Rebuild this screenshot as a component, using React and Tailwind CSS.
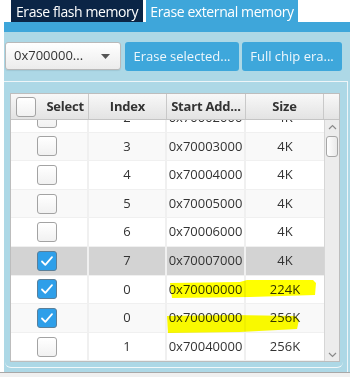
import React from 'react'

const rows = [
  { idx: '2', addr: '0x70002000', size: '4K', checked: false },
  { idx: '3', addr: '0x70003000', size: '4K', checked: false },
  { idx: '4', addr: '0x70004000', size: '4K', checked: false },
  { idx: '5', addr: '0x70005000', size: '4K', checked: false },
  { idx: '6', addr: '0x70006000', size: '4K', checked: false },
  { idx: '7', addr: '0x70007000', size: '4K', checked: true, selected: true },
  { idx: '0', addr: '0x70000000', size: '224K', checked: true },
  { idx: '0', addr: '0x70000000', size: '256K', checked: true },
  { idx: '1', addr: '0x70040000', size: '256K', checked: false },
]

function CheckBox({ checked }) {
  if (checked) {
    return (
      <div className="w-[20px] h-[20px] rounded-[3px] border border-[#5a7f99] bg-[#2e9fe9] flex items-center justify-center">
        <svg width="14" height="12" viewBox="0 0 14 12">
          <path d="M2 6.5 L5.3 9.8 L12 2.2" stroke="white" strokeWidth="1.8" fill="none" strokeLinecap="round" strokeLinejoin="round" />
        </svg>
      </div>
    )
  }
  return <div className="w-[20px] h-[20px] rounded-[3px] border border-[#a3a3a3] bg-linear-to-b from-white to-[#f1f1f1]" />
}

const headCell = 'h-full flex items-center justify-center border-r border-[#c9c9c9] bg-linear-to-b from-[#f8f8f8] to-[#e3e3e3] font-bold text-[13px] tracking-[-0.2px] text-[#333]'

export default function App() {
  return (
    <div
      className="relative w-[350px] h-[377px] bg-white overflow-hidden flex flex-col"
      style={{ fontFamily: '"Open Sans", "Noto Sans", sans-serif' }}
    >
      {/* tabs */}
      <div className="flex h-[22px] pl-[11px] gap-[3px] shrink-0">
        <div className="w-[132px] bg-[#0b2546] text-white text-[14px] tracking-[-0.4px] flex items-center justify-center">Erase flash memory</div>
        <div className="w-[152px] bg-[#3ea6da] text-white text-[14px] tracking-[-0.4px] flex items-center justify-center">Erase external memory</div>
      </div>
      <div className="ml-[4px] h-[10px] bg-[#3ea6da] shrink-0" />

      <div className="ml-[4px] flex-1 bg-[#add8e6] flex flex-col">
        {/* toolbar */}
        <div className="flex pt-[10px] pl-[1px] items-start">
          <div className="w-[116px] h-[28px] rounded-[3px] border border-[#b9b9b9] bg-linear-to-b from-white to-[#ececec] flex items-center justify-between pl-[8px] pr-[10px] text-[13px] text-[#333] shadow-[0_1px_1px_rgba(0,0,0,0.08)]">
            <span>0x700000...</span>
            <svg width="9" height="5" viewBox="0 0 9 5"><path d="M0 0 H9 L4.5 5 Z" fill="#555" /></svg>
          </div>
          <button className="ml-[4px] w-[114px] h-[29px] rounded-[3px] bg-[#3ea7db] text-[#eef7fc] text-[13px]">Erase selected...</button>
          <button className="ml-[3px] w-[100px] h-[29px] rounded-[3px] bg-[#3ea7db] text-[#eef7fc] text-[13px]">Full chip era...</button>
        </div>

        {/* table region */}
        <div className="mt-[10px] flex-1 border-t border-r border-[#eef5f8] mr-[2px]">
          <div className="ml-[1px] w-[338px] pl-[5px] pt-[11px] pb-[5px] border-b border-[#f2f8fa] rounded-b-[6px]">
            <div className="w-[330px] h-[269px] border border-[#bdbdbd] flex flex-col bg-white">
              {/* header */}
              <div className="flex h-[26px] border-b border-[#c4c4c4] shrink-0">
                <div className={`${headCell} w-[78px] !justify-between pl-[5px] pr-[4px]`}>
                  <CheckBox checked={false} />
                  <span>Select</span>
                </div>
                <div className={`${headCell} w-[78px]`}>Index</div>
                <div className={`${headCell} w-[79px]`}>Start Add...</div>
                <div className={`${headCell} w-[78px]`}>Size</div>
                <div className="h-full w-[15px] bg-linear-to-b from-[#f8f8f8] to-[#e3e3e3]" />
              </div>

              {/* body */}
              <div className="flex flex-1 overflow-hidden">
                <div className="w-[313px] overflow-hidden">
                  <div className="mt-[-16px]">
                    {rows.map((r, i) => {
                      const bg = r.selected ? 'bg-[#d3d3d3]' : i % 2 === 0 ? 'bg-white' : 'bg-[#f9f9f9]'
                      return (
                        <div key={i} className={`flex h-[28.6px] border-b border-[#f0f0f0] ${bg} text-[13px] text-[#333]`}>
                          <div className="w-[78px] flex items-center justify-center pr-[4px] border-r-2 border-[#f0f0f0]">
                            <CheckBox checked={r.checked} />
                          </div>
                          <div className="w-[78px] flex items-center justify-center border-r-2 border-[#f0f0f0]">{r.idx}</div>
                          <div className="w-[79px] flex items-center justify-center border-r-2 border-[#f0f0f0]">{r.addr}</div>
                          <div className="w-[78px] flex items-center justify-center">{r.size}</div>
                        </div>
                      )
                    })}
                  </div>
                </div>
                {/* scrollbar */}
                <div className="w-[15px] bg-[#ececec] border-l border-[#d6d6d6] flex flex-col items-center">
                  <svg className="mt-[4px]" width="9" height="6" viewBox="0 0 9 6">
                    <path d="M1 5 L4.5 1.5 L8 5" stroke="#8a8a8a" strokeWidth="1.2" fill="none" />
                  </svg>
                  <div className="mt-[6px] w-[12px] h-[21px] rounded-[3px] border border-[#a6a6a6] bg-linear-to-r from-white to-[#e9e9e9]" />
                  <div className="flex-1" />
                  <svg className="mb-[3px]" width="9" height="6" viewBox="0 0 9 6">
                    <path d="M1 1 L4.5 4.5 L8 1" stroke="#8a8a8a" strokeWidth="1.2" fill="none" />
                  </svg>
                </div>
              </div>
            </div>
          </div>
        </div>
      </div>

      <div className="h-[5px] border-t border-[#a8a8a8] bg-[#f0f0f0] shrink-0" />

      {/* yellow marker annotations */}
      <svg className="absolute inset-0 pointer-events-none mix-blend-multiply" width="350" height="377">
        <path d="M170 283 L240 282 L247 280 L313 280 L316 283 L315 295 L250 297 L172 298 Z" fill="#ffff00" />
        <path d="M167 316 L232 315 L295 316 L299 320 L297 329 L240 332 L168 333 Z" fill="#ffff00" />
      </svg>
    </div>
  )
}
